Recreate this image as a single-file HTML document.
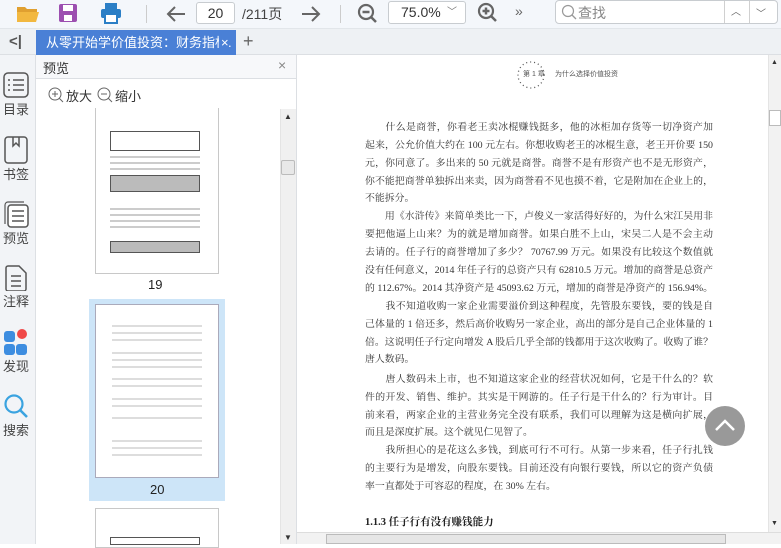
<!DOCTYPE html>
<html><head><meta charset="utf-8"><style>
*{margin:0;padding:0;box-sizing:border-box}
body{width:781px;height:544px;overflow:hidden;background:#fff;font-family:"Liberation Sans","Noto Sans CJK SC",sans-serif;position:relative;color:#333}
.a{position:absolute}
.tb{left:0;top:0;width:781px;height:29px;background:#f4f7fb;border-bottom:1px solid #e2e6ea}
.tabbar{left:0;top:29px;width:781px;height:26px;background:#eef1f4;border-bottom:1px solid #dcdfe3}
.rail{left:0;top:55px;width:36px;height:489px;background:#f2f4f7;border-right:1px solid #dde0e4}
.rl{font-size:13px;color:#444;left:0;width:32px;text-align:center}
.pv{left:36px;top:55px;width:261px;height:489px;background:#fff;border-right:1px solid #dcdfe3}
.ln{position:absolute;left:365px;width:348px;font-family:"Liberation Serif","Noto Serif CJK SC",serif;font-size:9.9px;color:#333;text-align:justify;text-align-last:justify;white-space:nowrap;line-height:16px;overflow:visible}
.ln.s{text-align-last:left}
.thumb{position:absolute;background:#fff;border:1px solid #c8c8c8}
.gl{position:absolute;height:2px;background:#ccc}
</style></head><body>
<div class="a tb"></div>
<svg class="a" style="left:16px;top:3px" width="24" height="20"><path d="M1 4h8l2 2h10v3H1z" fill="#e0a030"/><path d="M1 9h22l-3 10H1z" fill="#f2b840"/></svg>
<svg class="a" style="left:58px;top:3px" width="20" height="20"><rect x="1" y="1" width="18" height="18" rx="2" fill="#9c4fb0"/><rect x="5" y="2" width="10" height="6" fill="#fff"/><rect x="6" y="12" width="8" height="6" fill="#fff"/></svg>
<svg class="a" style="left:100px;top:2px" width="22" height="22"><rect x="5" y="1" width="12" height="6" fill="#2b7fc6"/><rect x="1" y="7" width="20" height="9" rx="2" fill="#2b7fc6"/><rect x="5" y="12" width="12" height="9" fill="#fff" stroke="#2b7fc6" stroke-width="2"/></svg>
<div class="a" style="left:146px;top:5px;width:1px;height:18px;background:#ccc"></div>
<svg class="a" style="left:165px;top:4px" width="22" height="20"><path d="M20 10H3M10 3L3 10l7 7" stroke="#666" stroke-width="2" fill="none"/></svg>
<div class="a" style="left:196px;top:2px;width:39px;height:22px;border:1px solid #c8ccd0;border-radius:3px;background:#fff;font-size:14px;text-align:center;line-height:20px;color:#333">20</div>
<div class="a" style="left:242px;top:4px;font-size:14px;color:#444">/211页</div>
<svg class="a" style="left:300px;top:4px" width="22" height="20"><path d="M2 10h17M12 3l7 7-7 7" stroke="#666" stroke-width="2" fill="none"/></svg>
<div class="a" style="left:340px;top:5px;width:1px;height:18px;background:#ccc"></div>
<svg class="a" style="left:357px;top:3px" width="22" height="22"><circle cx="9" cy="9" r="7" stroke="#666" stroke-width="2.2" fill="none"/><path d="M5.5 9h7M14 14l5 5" stroke="#666" stroke-width="2.5"/></svg>
<div class="a" style="left:388px;top:1px;width:78px;height:23px;border:1px solid #c8ccd0;border-radius:3px;background:#fff;font-size:14px;line-height:21px;padding-left:12px;color:#333">75.0%<span style="position:absolute;left:58px;top:0;color:#777;font-size:10px">﹀</span></div>
<svg class="a" style="left:477px;top:2px" width="22" height="22"><circle cx="9" cy="9" r="7" stroke="#666" stroke-width="2.2" fill="none"/><path d="M5.5 9h7M9 5.5v7M14 14l5 5" stroke="#666" stroke-width="2.5"/></svg>
<div class="a" style="left:515px;top:3px;font-size:14px;color:#666">»</div>
<div class="a" style="left:555px;top:0px;width:223px;height:24px;border:1px solid #c8ccd0;border-radius:4px;background:#fff"></div>
<svg class="a" style="left:561px;top:4px" width="16" height="16"><circle cx="7" cy="7" r="5.5" stroke="#999" stroke-width="1.2" fill="none"/><path d="M11 11l4 4" stroke="#999" stroke-width="1.3"/></svg>
<div class="a" style="left:578px;top:3px;font-size:14px;color:#888">查找</div>
<div class="a" style="left:724px;top:1px;width:1px;height:22px;background:#d0d0d0"></div>
<div class="a" style="left:749px;top:1px;width:1px;height:22px;background:#d0d0d0"></div>
<div class="a" style="left:731px;top:3px;font-size:10px;color:#666">︿</div>
<div class="a" style="left:756px;top:5px;font-size:10px;color:#666">﹀</div>
<div class="a tabbar"></div>
<div class="a" style="left:9px;top:33px;font-size:15px;color:#555;font-weight:bold">&lt;|</div>
<div class="a" style="left:36px;top:30px;width:200px;height:25px;background:#4a80d6;color:#fff;font-size:13px;line-height:25px;padding-left:10px;white-space:nowrap;overflow:hidden">从零开始学价值投资：财务指标.<span style="position:absolute;left:183px;top:0;background:#4a80d6;padding-left:2px">×</span></div>
<div class="a" style="left:243px;top:31px;font-size:18px;color:#666">+</div>
<div class="a rail"></div>
<svg class="a" style="left:3px;top:72px" width="26" height="26"><rect x="1" y="1" width="24" height="24" rx="4" stroke="#555" stroke-width="1.5" fill="none"/><path d="M5 8h2M10 8h11M5 13h2M10 13h11M5 18h2M10 18h11" stroke="#555" stroke-width="1.6"/></svg>
<div class="a rl" style="top:99px">目录</div>
<svg class="a" style="left:4px;top:136px" width="24" height="28"><rect x="1" y="1" width="22" height="26" rx="3" stroke="#555" stroke-width="1.5" fill="none"/><path d="M9 1v9l3-3 3 3V1" stroke="#555" stroke-width="1.5" fill="none"/></svg>
<div class="a rl" style="top:164px">书签</div>
<svg class="a" style="left:3px;top:200px" width="26" height="28"><rect x="5" y="5" width="20" height="22" rx="3" stroke="#555" stroke-width="1.5" fill="#fff"/><path d="M2 24V5a3 3 0 013-3h16" stroke="#555" stroke-width="1.2" fill="none"/><path d="M9 11h12M9 16h12M9 21h12" stroke="#555" stroke-width="1.5"/></svg>
<div class="a rl" style="top:228px">预览</div>
<div class="a" style="left:31px;top:205px;width:0;height:0;border:6px solid transparent;border-right-color:#dde0e4"></div>
<svg class="a" style="left:5px;top:265px" width="22" height="26"><path d="M1 3a2 2 0 012-2h11l7 7v16a2 2 0 01-2 2H3a2 2 0 01-2-2z" stroke="#555" stroke-width="1.5" fill="none"/><path d="M6 11h10M6 16h10M6 21h10" stroke="#555" stroke-width="1.5"/></svg>
<div class="a rl" style="top:291px">注释</div>
<div class="a" style="left:4px;top:331px;width:11px;height:11px;border-radius:3px;background:#3d8de0"></div>
<div class="a" style="left:17px;top:329px;width:10px;height:10px;border-radius:50%;background:#f04848"></div>
<div class="a" style="left:4px;top:344px;width:11px;height:11px;border-radius:3px;background:#3d8de0"></div>
<div class="a" style="left:16px;top:344px;width:11px;height:11px;border-radius:3px;background:#3d8de0"></div>
<div class="a rl" style="top:356px">发现</div>
<svg class="a" style="left:3px;top:393px" width="26" height="26"><circle cx="11" cy="11" r="8.5" stroke="#3aa3e0" stroke-width="2.2" fill="none"/><path d="M17 17l7 7" stroke="#3aa3e0" stroke-width="2.6"/></svg>
<div class="a rl" style="top:420px">搜索</div>
<div class="a pv"></div>
<div class="a" style="left:36px;top:55px;width:260px;height:24px;background:#f7f8fa;border-bottom:1px solid #dcdfe3"></div>
<div class="a" style="left:43px;top:58px;font-size:13px;color:#333">预览</div>
<div class="a" style="left:278px;top:57px;font-size:14px;color:#888">×</div>
<svg class="a" style="left:48px;top:87px" width="16" height="16"><circle cx="7" cy="7" r="6" stroke="#666" fill="none"/><path d="M4 7h6M7 4v6M11 11l4 4" stroke="#666"/></svg>
<div class="a" style="left:66px;top:86px;font-size:13px;color:#333">放大</div>
<svg class="a" style="left:97px;top:87px" width="16" height="16"><circle cx="7" cy="7" r="6" stroke="#666" fill="none"/><path d="M4 7h6M11 11l4 4" stroke="#666"/></svg>
<div class="a" style="left:115px;top:86px;font-size:13px;color:#333">缩小</div>
<div class="thumb" style="left:95px;top:108px;width:124px;height:166px;border-top:none"></div>
<div class="a" style="left:110px;top:131px;width:90px;height:20px;border:1px solid #555"></div>
<div class="gl" style="left:110px;top:156px;width:90px"></div><div class="gl" style="left:110px;top:162px;width:90px"></div><div class="gl" style="left:110px;top:168px;width:90px"></div>
<div class="a" style="left:110px;top:175px;width:90px;height:17px;border:1px solid #555;background:#bbb"></div>
<div class="gl" style="left:110px;top:208px;width:90px"></div><div class="gl" style="left:110px;top:214px;width:90px"></div><div class="gl" style="left:110px;top:220px;width:90px"></div><div class="gl" style="left:110px;top:226px;width:90px"></div>
<div class="a" style="left:110px;top:241px;width:90px;height:12px;border:1px solid #555;background:#bbb"></div>
<div class="a" style="left:148px;top:277px;font-size:13px;color:#222">19</div>
<div class="a" style="left:89px;top:299px;width:136px;height:202px;background:#cde5f8"></div>
<div class="thumb" style="left:95px;top:304px;width:124px;height:174px;border-color:#aab"></div>
<div class="gl" style="left:112px;top:325px;width:90px;background:#ddd"></div><div class="gl" style="left:112px;top:332px;width:90px;background:#ddd"></div><div class="gl" style="left:112px;top:339px;width:90px;background:#ddd"></div>
<div class="gl" style="left:112px;top:352px;width:90px;background:#ddd"></div><div class="gl" style="left:112px;top:359px;width:90px;background:#ddd"></div><div class="gl" style="left:112px;top:366px;width:90px;background:#ddd"></div>
<div class="gl" style="left:112px;top:378px;width:90px;background:#ddd"></div><div class="gl" style="left:112px;top:385px;width:90px;background:#ddd"></div><div class="gl" style="left:112px;top:398px;width:90px;background:#ddd"></div><div class="gl" style="left:112px;top:405px;width:90px;background:#ddd"></div><div class="gl" style="left:112px;top:417px;width:90px;background:#ddd"></div>
<div class="gl" style="left:112px;top:440px;width:90px;background:#ddd"></div><div class="gl" style="left:112px;top:447px;width:90px;background:#ddd"></div><div class="gl" style="left:112px;top:454px;width:90px;background:#ddd"></div>
<div class="a" style="left:150px;top:482px;font-size:13px;color:#222">20</div>
<div class="thumb" style="left:95px;top:508px;width:124px;height:40px"></div>
<div class="a" style="left:110px;top:537px;width:90px;height:8px;border:1px solid #555"></div>
<div class="a" style="left:280px;top:109px;width:16px;height:435px;background:#f0f0f0;border-left:1px solid #e4e4e4"></div>
<div class="a" style="left:281px;top:160px;width:14px;height:15px;background:#e8e8e8;border:1px solid #bbb;border-radius:2px"></div>
<div class="a" style="left:284px;top:112px;font-size:8px;color:#333">▲</div>
<div class="a" style="left:284px;top:533px;font-size:8px;color:#333">▼</div>
<div class="a" style="left:768px;top:55px;width:13px;height:477px;background:#f2f2f2;border-left:1px solid #e4e4e4"></div>
<div class="a" style="left:769px;top:110px;width:12px;height:16px;background:#fff;border:1px solid #bbb"></div>
<div class="a" style="left:771px;top:59px;font-size:7px">▲</div>
<div class="a" style="left:771px;top:520px;font-size:7px">▼</div>
<div class="a" style="left:297px;top:532px;width:484px;height:12px;background:#f2f2f2;border-top:1px solid #ddd"></div>
<div class="a" style="left:326px;top:534px;width:400px;height:10px;background:#e6e6e6;border:1px solid #bbb"></div>
<svg class="a" style="left:516px;top:58px" width="30" height="34"><circle cx="15" cy="17" r="13" stroke="#555" stroke-width="1.3" stroke-dasharray="1 3" fill="none"/></svg>
<div class="a" style="left:523px;top:69px;font-size:7px;color:#555">第 1 章</div>
<div class="a" style="left:555px;top:69px;font-size:7px;color:#555">为什么选择价值投资</div>
<div class="ln" style="top:120px">　　什么是商誉，你看老王卖冰棍赚钱挺多，他的冰柜加存货等一切净资产加</div>
<div class="ln" style="top:138px">起来，公允价值大约在 100 元左右。你想收购老王的冰棍生意，老王开价要 150</div>
<div class="ln" style="top:156px">元，你同意了。多出来的 50 元就是商誉。商誉不是有形资产也不是无形资产，</div>
<div class="ln" style="top:174px">你不能把商誉单独拆出来卖，因为商誉看不见也摸不着，它是附加在企业上的，</div>
<div class="ln s" style="top:191px">不能拆分。</div>
<div class="ln" style="top:209px">　　用《水浒传》来简单类比一下，卢俊义一家活得好好的，为什么宋江吴用非</div>
<div class="ln" style="top:227px">要把他逼上山来？为的就是增加商誉。如果白胜不上山，宋吴二人是不会主动</div>
<div class="ln" style="top:245px">去请的。任子行的商誉增加了多少？ 70767.99 万元。如果没有比较这个数值就</div>
<div class="ln" style="top:263px">没有任何意义，2014 年任子行的总资产只有 62810.5 万元。增加的商誉是总资产</div>
<div class="ln" style="top:281px">的 112.67%。2014 其净资产是 45093.62 万元，增加的商誉是净资产的 156.94%。</div>
<div class="ln" style="top:299px">　　我不知道收购一家企业需要溢价到这种程度，先管股东要钱，要的钱是自</div>
<div class="ln" style="top:317px">己体量的 1 倍还多，然后高价收购另一家企业，高出的部分是自己企业体量的 1</div>
<div class="ln" style="top:335px">倍。这说明任子行定向增发 A 股后几乎全部的钱都用于这次收购了。收购了谁？</div>
<div class="ln s" style="top:352px">唐人数码。</div>
<div class="ln" style="top:372px">　　唐人数码未上市，也不知道这家企业的经营状况如何，它是干什么的？软</div>
<div class="ln" style="top:390px">件的开发、销售、维护。其实是干网游的。任子行是干什么的？行为审计。目</div>
<div class="ln" style="top:408px">前来看，两家企业的主营业务完全没有联系，我们可以理解为这是横向扩展，</div>
<div class="ln s" style="top:425px">而且是深度扩展。这个就见仁见智了。</div>
<div class="ln" style="top:443px">　　我所担心的是花这么多钱，到底可行不可行。从第一步来看，任子行扎钱</div>
<div class="ln" style="top:461px">的主要行为是增发，向股东要钱。目前还没有向银行要钱，所以它的资产负债</div>
<div class="ln s" style="top:479px">率一直都处于可容忍的程度，在 30% 左右。</div>
<div class="ln s" style="top:515px;font-weight:bold;color:#222;font-size:10.5px">1.1.3  任子行有没有赚钱能力</div>
<div class="a" style="left:705px;top:406px;width:40px;height:40px;border-radius:50%;background:#999"></div>
<svg class="a" style="left:705px;top:406px" width="40" height="40"><path d="M11 24l9-9 9 9" stroke="#fff" stroke-width="2.5" fill="none"/></svg>
</body></html>
